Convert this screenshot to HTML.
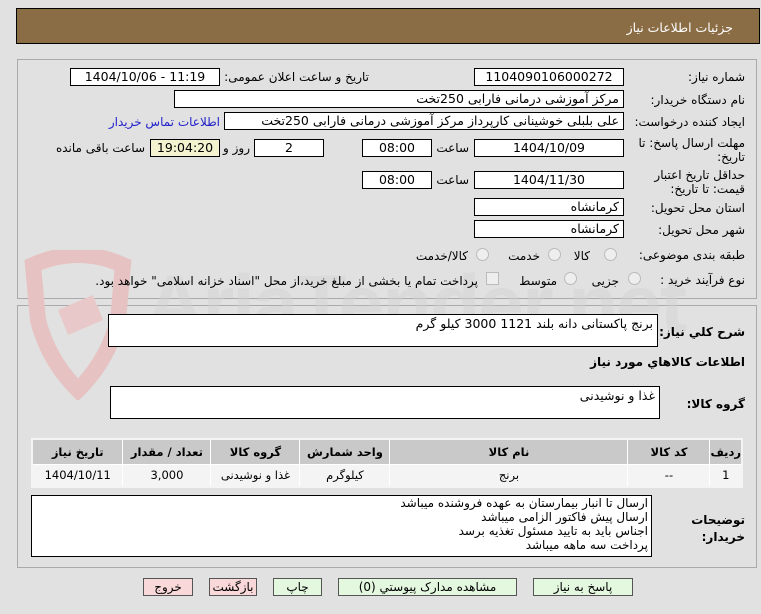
<!DOCTYPE html>
<html><head><meta charset="utf-8"><style>
*{box-sizing:border-box;margin:0;padding:0}
body{width:761px;height:614px;background:#e1e1e1;font-family:"DejaVu Sans","Liberation Sans",sans-serif;font-size:12px;color:#000;position:relative;overflow:hidden}
.a{position:absolute;white-space:nowrap}
.box{position:absolute;background:#fff;border:1px solid #000;text-align:center;line-height:16px;font-size:12.5px}
.l{position:absolute;white-space:nowrap;direction:rtl;text-align:right}
.r{position:absolute;width:13px;height:13px;border-radius:50%;border:1px solid #bbb;background:#eee}
.btn{position:absolute;top:578px;height:18px;border:1px solid #555;font-size:12px;text-align:center;line-height:16px}
th,td{border:1px solid #fff}
</style></head><body>
<div class="a" style="left:16px;top:8px;width:744px;height:36px;background:#8b6d45;border:1px solid #000"></div>
<div class="l" style="right:28px;top:20px;color:#fff;font-size:12.5px">جزئیات اطلاعات نیاز</div>
<div class="a" style="left:17px;top:59px;width:740px;height:240px;border:1px solid #aaa"></div>
<div class="a" style="left:17px;top:305px;width:740px;height:263px;border:1px solid #aaa"></div>
<!-- watermark -->
<svg class="a" style="left:18px;top:250px" width="120" height="150" viewBox="0 0 120 150"><path d="M15 15 Q60 -5 105 15 L100 70 Q90 110 60 140 Q30 110 20 70 Z" fill="none" stroke="#e6c2c2" stroke-width="16"/><path d="M40 60 L75 45 L85 70 L50 85 Z" fill="#e8c8c8"/></svg>
<div class="a" style="left:145px;top:258px;font-size:82px;font-weight:bold;color:#d2d2d2;opacity:.45;font-family:'Liberation Sans',sans-serif;letter-spacing:-2px">AriaTender.net</div>

<div class="l" style="right:16px;top:70px">شماره نیاز:</div>
<div class="box" style="left:474px;top:68px;width:150px;height:18px">1104090106000272</div>
<div class="l" style="right:392px;top:70px">تاریخ و ساعت اعلان عمومی:</div>
<div class="box" style="left:70px;top:68px;width:150px;height:18px">1404/10/06 - 11:19</div>

<div class="l" style="right:16px;top:93px">نام دستگاه خریدار:</div>
<div class="box" style="left:174px;top:90px;width:450px;height:18px;text-align:right;padding-right:4px;direction:rtl">مرکز آموزشی  درمانی فارابی 250تخت</div>

<div class="l" style="right:16px;top:115px">ایجاد کننده درخواست:</div>
<div class="box" style="left:224px;top:112px;width:400px;height:18px;text-align:right;padding-right:4px;direction:rtl">علی بلبلی خوشینانی کارپرداز مرکز آموزشی  درمانی فارابی 250تخت</div>
<div class="l" style="right:541px;top:115px;color:#2222cc">اطلاعات تماس خریدار</div>

<div class="l" style="right:16px;top:136px;line-height:14px">مهلت ارسال پاسخ: تا<br>تاریخ:</div>
<div class="box" style="left:474px;top:139px;width:150px;height:18px">1404/10/09</div>
<div class="l" style="right:292px;top:141px">ساعت</div>
<div class="box" style="left:362px;top:139px;width:70px;height:18px">08:00</div>
<div class="box" style="left:254px;top:139px;width:70px;height:18px">2</div>
<div class="l" style="right:511px;top:141px">روز و</div>
<div class="box" style="left:150px;top:139px;width:70px;height:18px;background:#f3f3cf">19:04:20</div>
<div class="l" style="right:616px;top:141px">ساعت باقی مانده</div>

<div class="l" style="right:16px;top:168px;line-height:14px">حداقل تاریخ اعتبار<br>قیمت: تا تاریخ:</div>
<div class="box" style="left:474px;top:171px;width:150px;height:18px">1404/11/30</div>
<div class="l" style="right:292px;top:173px">ساعت</div>
<div class="box" style="left:362px;top:171px;width:70px;height:18px">08:00</div>

<div class="l" style="right:16px;top:201px">استان محل تحویل:</div>
<div class="box" style="left:474px;top:198px;width:150px;height:18px;text-align:right;padding-right:4px">کرمانشاه</div>
<div class="l" style="right:16px;top:223px">شهر محل تحویل:</div>
<div class="box" style="left:474px;top:220px;width:150px;height:18px;text-align:right;padding-right:4px">کرمانشاه</div>

<div class="l" style="right:16px;top:248px">طبقه بندی موضوعی:</div>
<div class="r" style="left:604px;top:248px"></div><div class="l" style="right:171px;top:249px">کالا</div>
<div class="r" style="left:548px;top:248px"></div><div class="l" style="right:221px;top:249px">خدمت</div>
<div class="r" style="left:476px;top:248px"></div><div class="l" style="right:293px;top:249px">کالا/خدمت</div>

<div class="l" style="right:16px;top:273px">نوع فرآیند خرید :</div>
<div class="r" style="left:628px;top:272px"></div><div class="l" style="right:142px;top:274px">جزیی</div>
<div class="r" style="left:564px;top:272px"></div><div class="l" style="right:204px;top:274px">متوسط</div>
<div class="a" style="left:486px;top:272px;width:13px;height:13px;border:1px solid #bbb;background:#eee"></div>
<div class="l" style="right:283px;top:274px">پرداخت تمام یا بخشی از مبلغ خرید،از محل "اسناد خزانه اسلامی" خواهد بود.</div>

<div class="l" style="right:16px;top:325px;font-weight:bold">شرح کلي نياز:</div>
<div class="box" style="left:108px;top:314px;width:550px;height:33px;text-align:right;padding-right:4px;direction:rtl;line-height:18px">برنج پاکستانی دانه بلند 1121  3000 کیلو گرم</div>
<div class="l" style="right:16px;top:355px;font-weight:bold">اطلاعات کالاهاي مورد نياز</div>
<div class="l" style="right:16px;top:397px;font-weight:bold">گروه کالا:</div>
<div class="box" style="left:110px;top:386px;width:550px;height:33px;text-align:right;padding-right:4px;direction:rtl;line-height:18px">غذا و نوشیدنی</div>

<table class="a" style="left:31px;top:438px;width:712px;height:50px;border-collapse:collapse;background:#fff;direction:rtl;border:2px solid #f4f4f4;font-size:11.5px;text-align:center">
<tr style="background:#c9c9c9;font-weight:bold;height:25px"><th style="width:30px">ردیف</th><th style="width:82px">کد کالا</th><th style="width:238px">نام کالا</th><th style="width:90px">واحد شمارش</th><th style="width:89px">گروه کالا</th><th style="width:88px">تعداد / مقدار</th><th>تاریخ نیاز</th></tr>
<tr style="background:#f4f4f4"><td>1</td><td>--</td><td>برنج</td><td>کیلوگرم</td><td>غذا و نوشیدنی</td><td>3,000</td><td>1404/10/11</td></tr>
</table>

<div class="l" style="right:16px;top:512px;font-weight:bold;line-height:17px">توضیحات<br>خریدار:</div>
<div class="box" style="left:31px;top:495px;width:621px;height:62px;text-align:right;padding-right:3px;direction:rtl;line-height:14px;font-size:12px">ارسال تا انبار بیمارستان به عهده فروشنده میباشد<br>ارسال پیش فاکتور الزامی میباشد<br>اجناس باید به تایید مسئول تغذیه برسد<br>پرداخت سه ماهه میباشد</div>

<div class="btn" style="left:533px;width:100px;background:#e4f8e0">پاسخ به نیاز</div>
<div class="btn" style="left:338px;width:179px;background:#e4f8e0">مشاهده مدارک پیوستي (0)</div>
<div class="btn" style="left:273px;width:49px;background:#e4f8e0">چاپ</div>
<div class="btn" style="left:209px;width:48px;background:#f8d8d8">بازگشت</div>
<div class="btn" style="left:143px;width:50px;background:#f8d8d8">خروج</div>
</body></html>
